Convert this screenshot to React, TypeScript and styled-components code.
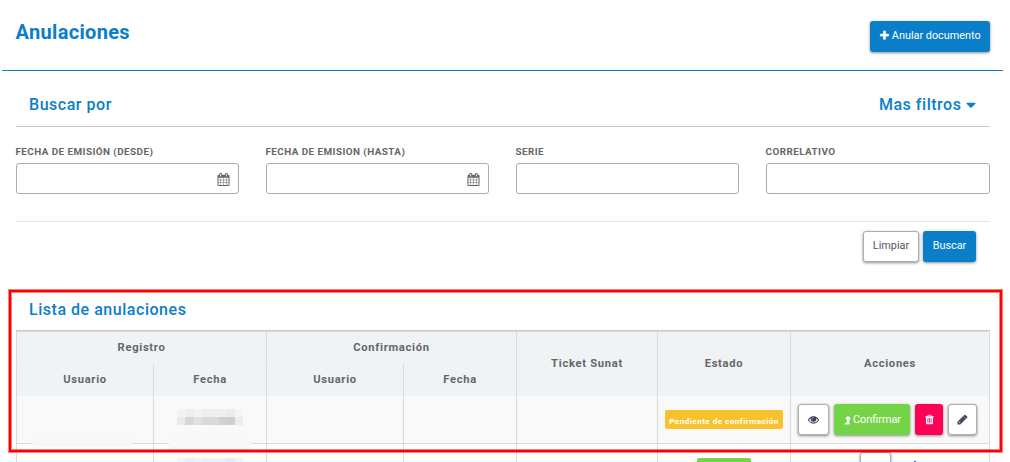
import React from "react";

import styled, { createGlobalStyle, css } from "styled-components";

const GlobalStyle = createGlobalStyle`
html,
body {
  height: 462px;
  margin: 0;
  padding: 0;
  overflow: hidden;
  background: #fff;
  font-family: Roboto, "Liberation Sans", sans-serif;
  color: #666;
}

*, *::before, *::after {
  box-sizing: border-box;
}
`;

const Page = styled.main`
  position: relative;
  width: 1010px;
  height: 462px;
  overflow: hidden;
`;

const Header = styled.header`
  display: flex;
  justify-content: space-between;
  align-items: flex-start;
  height: 71px;
  margin: 0 7px 0 2px;
  padding: 21px 13px 0 13.5px;
  border-bottom: 1px solid #0a7ec9;
`;

const Title = styled.h1`
  margin: 0;
  font-size: 20px;
  line-height: 22px;
  font-weight: 700;
  letter-spacing: 0.33px;
  color: #0a7ec9;
`;

const Content = styled.div`
  padding: 0 20px 0 16px;
`;

interface PanelHeadingProps {
  readonly $height: number;
  readonly $bottom?: number;
}

const PanelHeading = styled.div<PanelHeadingProps>`
  display: flex;
  justify-content: space-between;
  align-items: flex-end;
  height: ${({ $height }) => $height}px;
  padding: 0 14px ${({ $bottom = 11 }) => $bottom}px 13px;
  border-bottom: 1px solid #c8c8c8;
`;

const PanelTitle = styled.h2`
  display: flex;
  align-items: center;
  margin: 0;
  font-size: 16px;
  line-height: 20px;
  font-weight: 500;
  letter-spacing: 0.53px;
  color: #0a7ec9;

  svg {
    margin-left: -3px;
    margin-right: -3px;
  }
`;

const Filters = styled.div`
  display: grid;
  grid-template-columns: repeat(3, 223px) 224px;
  column-gap: 27px;
  height: 95px;
  padding-top: 18px;
  border-bottom: 1px solid #e6e6e6;
`;

const Label = styled.label`
  display: block;
  height: 18px;
  margin-left: -0.5px;
  font-size: 9.9px;
  line-height: 14px;
  font-weight: 700;
  letter-spacing: 0.44px;
  text-transform: uppercase;
  white-space: nowrap;
`;

const Input = styled.div`
  display: flex;
  align-items: center;
  justify-content: flex-end;
  height: 31px;
  padding: 1px 8px 0 0;
  border: 1px solid #a6adbd;
  border-radius: 3px;
`;

const Buttons = styled.div`
  display: flex;
  justify-content: flex-end;
  gap: 4px;
  height: 77px;
  padding: 9px 14px 0 0;
`;

type Tone = "primary" | "plain" | "success" | "danger";

const tones = {
  primary: css`
    background: #0a7ec9;
    color: #fff;
  `,
  plain: css`
    background: #fff;
    color: #54575c;
    border: 1px solid #a6adbd;

    svg {
      color: #3c4452;
    }
  `,
  success: css`
    background: #75d348;
    color: #fff;
  `,
  danger: css`
    background: #ff0059;
    color: #fff;
  `,
};

interface ButtonProps {
  readonly $tone: Tone;
  readonly $width: number;
}

const Button = styled.button<ButtonProps>`
  display: flex;
  align-items: center;
  justify-content: center;
  flex: none;
  width: ${({ $width }) => $width}px;
  height: 31px;
  padding: 0 0 2px;
  border: 0;
  border-radius: 3px;
  box-shadow: 0 1px 3px rgba(0, 0, 0, 0.45);
  font-family: inherit;
  font-size: 10.85px;
  letter-spacing: 0;
  white-space: nowrap;
  ${({ $tone }) => tones[$tone]}
`;

const ButtonText = styled.span`
  margin-left: 1.5px;
`;

const Table = styled.div`
  display: grid;
  grid-template-columns: 137px 113px 137px 113px 141px 133px 200px;
  grid-template-rows: 32px 32px 48px 48px;
  border-top: 1px solid #dcdcdc;
`;

interface CellProps {
  readonly $cols?: number;
  readonly $rows?: number;
  readonly $last?: boolean;
}

const cell = css<CellProps>`
  position: relative;
  display: flex;
  align-items: center;
  justify-content: center;
  grid-column: span ${({ $cols = 1 }) => $cols};
  grid-row: span ${({ $rows = 1 }) => $rows};
  border-left: 1px solid #dadada;
  ${({ $last }) =>
    $last &&
    css`
      border-right: 1px solid #dadada;
    `}
`;

const HeadCell = styled.div<CellProps>`
  ${cell}
  background: #eff3f6;
  border-bottom: 1px solid #eff3f6;
  font-size: 11.2px;
  font-weight: 700;
  letter-spacing: 0.7px;
`;

const Cell = styled.div<CellProps & { readonly $striped?: boolean }>`
  ${cell}
  border-bottom: 1px solid #dadada;
  background: ${({ $striped }) => ($striped ? "#f9f9f9" : "#fff")};
`;

const Actions = styled(Cell)`
  justify-content: flex-start;
  gap: 5px;
  padding-left: 7px;

  button {
    padding-bottom: 0;
  }
`;

const NextActions = styled(Cell)`
  align-items: flex-start;
  justify-content: flex-start;
  gap: 16px;
  padding: 8px 0 0 69px;
  color: #0a55a5;

  > svg {
    margin-top: 7px;
  }
`;

const Badge = styled.span<{ readonly $color: string }>`
  display: flex;
  align-items: center;
  justify-content: center;
  width: 118px;
  height: 19px;
  padding: 2px 0 0;
  border-radius: 2px;
  background: ${({ $color }) => $color};
  color: #fff;
  font-size: 8.1px;
  font-weight: 700;
  letter-spacing: 0.47px;
  white-space: nowrap;
`;

const NextBadge = styled(Badge)`
  align-self: flex-start;
  width: 54px;
  margin-top: 14px;
`;

const Mosaic = styled.div`
  display: grid;
  grid-template-columns: 8px 9px 8px 9px 8px 8px 8px 8px;
  grid-auto-rows: 8px;
  align-self: flex-start;
  margin-top: 13px;
`;

const NextMosaic = styled(Mosaic)`
  margin-top: 14px;
`;

const Tile = styled.span<{ readonly $color: string }>`
  background: ${({ $color }) => $color};
`;

interface SmudgeProps {
  readonly $left: number;
  readonly $top: number;
  readonly $width: number;
  readonly $height: number;
}

// hides part of the border under a redacted value
const Smudge = styled.span<SmudgeProps>`
  position: absolute;
  z-index: 1;
  left: ${({ $left }) => $left}px;
  top: ${({ $top }) => $top}px;
  width: ${({ $width }) => $width}px;
  height: ${({ $height }) => $height}px;
  background: #f8f8f8;
`;

const Highlight = styled.div`
  position: absolute;
  z-index: 2;
  left: 9px;
  top: 290px;
  width: 993px;
  height: 162px;
  border: 2px solid #f00;
  box-shadow: 0 0 0 1px rgba(255, 0, 0, 0.5),
    inset 0 0 0 1px rgba(255, 0, 0, 0.5);
  pointer-events: none;
`;

const icons = {
  plus: "M1600 736v192q0 40-28 68t-68 28h-416v416q0 40-28 68t-68 28h-192q-40 0-68-28t-28-68v-416h-416q-40 0-68-28t-28-68v-192q0-40 28-68t68-28h416v-416q0-40 28-68t68-28h192q40 0 68 28t28 68v416h416q40 0 68 28t28 68z",
  caret:
    "M1408 704q0 26-19 45l-448 448q-19 19-45 19t-45-19l-448-448q-19-19-19-45t19-45 45-19h896q26 0 45 19t19 45z",
  calendar:
    "M192 1664h288v-288h-288v288zm352 0h320v-288h-320v288zm-352-352h288v-320h-288v320zm352 0h320v-320h-320v320zm-352-384h288v-288h-288v288zm736 736h320v-288h-320v288zm-384-736h320v-288h-320v288zm768 736h288v-288h-288v288zm-384-352h320v-320h-320v320zm-352-864v-288q0-13-9.5-22.5t-22.5-9.5h-64q-13 0-22.5 9.5t-9.5 22.5v288q0 13 9.5 22.5t22.5 9.5h64q13 0 22.5-9.5t9.5-22.5zm736 864h288v-320h-288v320zm-384-384h320v-288h-320v288zm384 0h288v-288h-288v288zm32-480v-288q0-13-9.5-22.5t-22.5-9.5h-64q-13 0-22.5 9.5t-9.5 22.5v288q0 13 9.5 22.5t22.5 9.5h64q13 0 22.5-9.5t9.5-22.5zm384-64v1280q0 52-38 90t-90 38h-1408q-52 0-90-38t-38-90v-1280q0-52 38-90t90-38h128v-96q0-66 47-113t113-47h64q66 0 113 47t47 113v96h384v-96q0-66 47-113t113-47h64q66 0 113 47t47 113v96h128q52 0 90 38t38 90z",
  eye: "M1664 960q-152-236-381-353 61 104 61 225 0 185-131.5 316.5t-316.5 131.5-316.5-131.5-131.5-316.5q0-121 61-225-229 117-381 353 133 205 333.5 326.5t434.5 121.5 434.5-121.5 333.5-326.5zm-720-384q0-20-14-34t-34-14q-125 0-214.5 89.5t-89.5 214.5q0 20 14 34t34 14 34-14 14-34q0-86 61-147t147-61q20 0 34-14t14-34zm848 384q0 34-20 69-140 230-376.5 368.5t-499.5 138.5-499.5-139-376.5-368q-20-35-20-69t20-69q140-229 376.5-368t499.5-139 499.5 139 376.5 368q20 35 20 69z",
  levelUp:
    "M1370 700q-18 36-58 36h-184v864q0 64-64 64h-744q-20 0-30-19-8-20 5-35l160-192q9-11 25-11h248v-671h-184q-40 0-58-36-17-38 9-69l352-420q18-22 49-22t49 22l416 420q27 32 9 69z",
  trash:
    "M704 1376v-704q0-14-9-23t-23-9h-64q-14 0-23 9t-9 23v704q0 14 9 23t23 9h64q14 0 23-9t9-23zm256 0v-704q0-14-9-23t-23-9h-64q-14 0-23 9t-9 23v704q0 14 9 23t23 9h64q14 0 23-9t9-23zm256 0v-704q0-14-9-23t-23-9h-64q-14 0-23 9t-9 23v704q0 14 9 23t23 9h64q14 0 23-9t9-23zm-544-992h448l-48-117q-7-9-17-11h-317q-10 2-17 11zm928 32v64q0 14-9 23t-23 9h-96v948q0 83-47 143.5t-113 60.5h-832q-66 0-113-58.5t-47-141.5v-952h-96q-14 0-23-9t-9-23v-64q0-14 9-23t23-9h309l70-167q15-37 54-63t79-26h320q40 0 79 26t54 63l70 167h309q14 0 23 9t9 23z",
  pencil:
    "M491 1536l91-91-235-235-91 91v107h128v128h107zm523-928q0-22-22-22-10 0-17 7l-542 542q-7 7-7 17 0 22 22 22 10 0 17-7l542-542q7-7 7-17zm-54-192l416 416-832 832h-416v-416zm683 96q0 53-37 90l-166 166-416-416 166-165q36-38 90-38 53 0 91 38l235 234q37 39 37 91z",
};

interface IconProps {
  name: keyof typeof icons;
  size?: number;
  stroke?: number;
}

const Icon = ({ name, size = 11, stroke = 0 }: IconProps) => (
  <svg
    width={size}
    height={size}
    viewBox="0 0 1792 1792"
    fill="currentColor"
    stroke="currentColor"
    strokeWidth={stroke}
  >
    <path d={icons[name]} />
  </svg>
);

const topTiles = [
  "#f3f3f2",
  "#eeeeee",
  "#f3f3f3",
  "#efefef",
  "#f0f0f0",
  "#f0f0f0",
  "#ebebeb",
  "#f3f4f4",
];

const bottomTiles = [
  "#edeae8",
  "#d6d7d9",
  "#e1e1e0",
  "#dadada",
  "#dbdad8",
  "#d0d1d0",
  "#cfcfcf",
  "#e9ebed",
];

const filters = [
  { label: "Fecha de emisión (desde)", date: true },
  { label: "Fecha de emision (hasta)", date: true },
  { label: "Serie", date: false },
  { label: "Correlativo", date: false },
];

const App = () => {
  return (
    <Page>
      <GlobalStyle />
      <Header>
        <Title>Anulaciones</Title>
        <Button $tone="primary" $width={120}>
          <Icon name="plus" stroke={60} />
          <ButtonText>Anular documento</ButtonText>
        </Button>
      </Header>
      <Content>
        <PanelHeading $height={56}>
          <PanelTitle>Buscar por</PanelTitle>
          <PanelTitle>
            Mas filtros&nbsp;
            <Icon name="caret" size={16} />
          </PanelTitle>
        </PanelHeading>
        <Filters>
          {filters.map(({ label, date }) => (
            <div key={label}>
              <Label>{label}</Label>
              <Input>{date && <Icon name="calendar" size={13} />}</Input>
            </div>
          ))}
        </Filters>
        <Buttons>
          <Button $tone="plain" $width={56}>
            Limpiar
          </Button>
          <Button $tone="primary" $width={53}>
            Buscar
          </Button>
        </Buttons>
        <PanelHeading $height={32} $bottom={10}>
          <PanelTitle>Lista de anulaciones</PanelTitle>
        </PanelHeading>
        <Table>
          <HeadCell $cols={2}>Registro</HeadCell>
          <HeadCell $cols={2}>Confirmación</HeadCell>
          <HeadCell $rows={2}>Ticket Sunat</HeadCell>
          <HeadCell $rows={2}>Estado</HeadCell>
          <HeadCell $rows={2} $last>
            Acciones
          </HeadCell>
          <HeadCell>Usuario</HeadCell>
          <HeadCell>Fecha</HeadCell>
          <HeadCell>Usuario</HeadCell>
          <HeadCell>Fecha</HeadCell>

          <Cell $striped>
            <Smudge $left={16} $top={43} $width={99} $height={8} />
          </Cell>
          <Cell $striped>
            <Mosaic>
              {[...topTiles, ...bottomTiles].map((color, i) => (
                <Tile key={i} $color={color} />
              ))}
            </Mosaic>
            <Smudge $left={15} $top={43} $width={82} $height={11} />
          </Cell>
          <Cell $striped />
          <Cell $striped />
          <Cell $striped />
          <Cell $striped>
            <Badge $color="#f7c22c">Pendiente de confirmación</Badge>
          </Cell>
          <Actions $striped $last>
            <Button $tone="plain" $width={31}>
              <Icon name="eye" stroke={50} />
            </Button>
            <Button $tone="success" $width={76}>
              <Icon name="levelUp" size={10} stroke={60} />
              <span>Confirmar</span>
            </Button>
            <Button $tone="danger" $width={28}>
              <Icon name="trash" />
            </Button>
            <Button $tone="plain" $width={29}>
              <Icon name="pencil" stroke={70} />
            </Button>
          </Actions>

          <Cell />
          <Cell>
            <NextMosaic>
              {topTiles.map((color, i) => (
                <Tile key={i} $color={color} />
              ))}
            </NextMosaic>
          </Cell>
          <Cell />
          <Cell />
          <Cell />
          <Cell>
            <NextBadge $color="#75d348" />
          </Cell>
          <NextActions $last>
            <Button $tone="plain" $width={31} />
            <Icon name="levelUp" size={16} />
          </NextActions>
        </Table>
      </Content>
      <Highlight />
    </Page>
  );
};

export default App;
